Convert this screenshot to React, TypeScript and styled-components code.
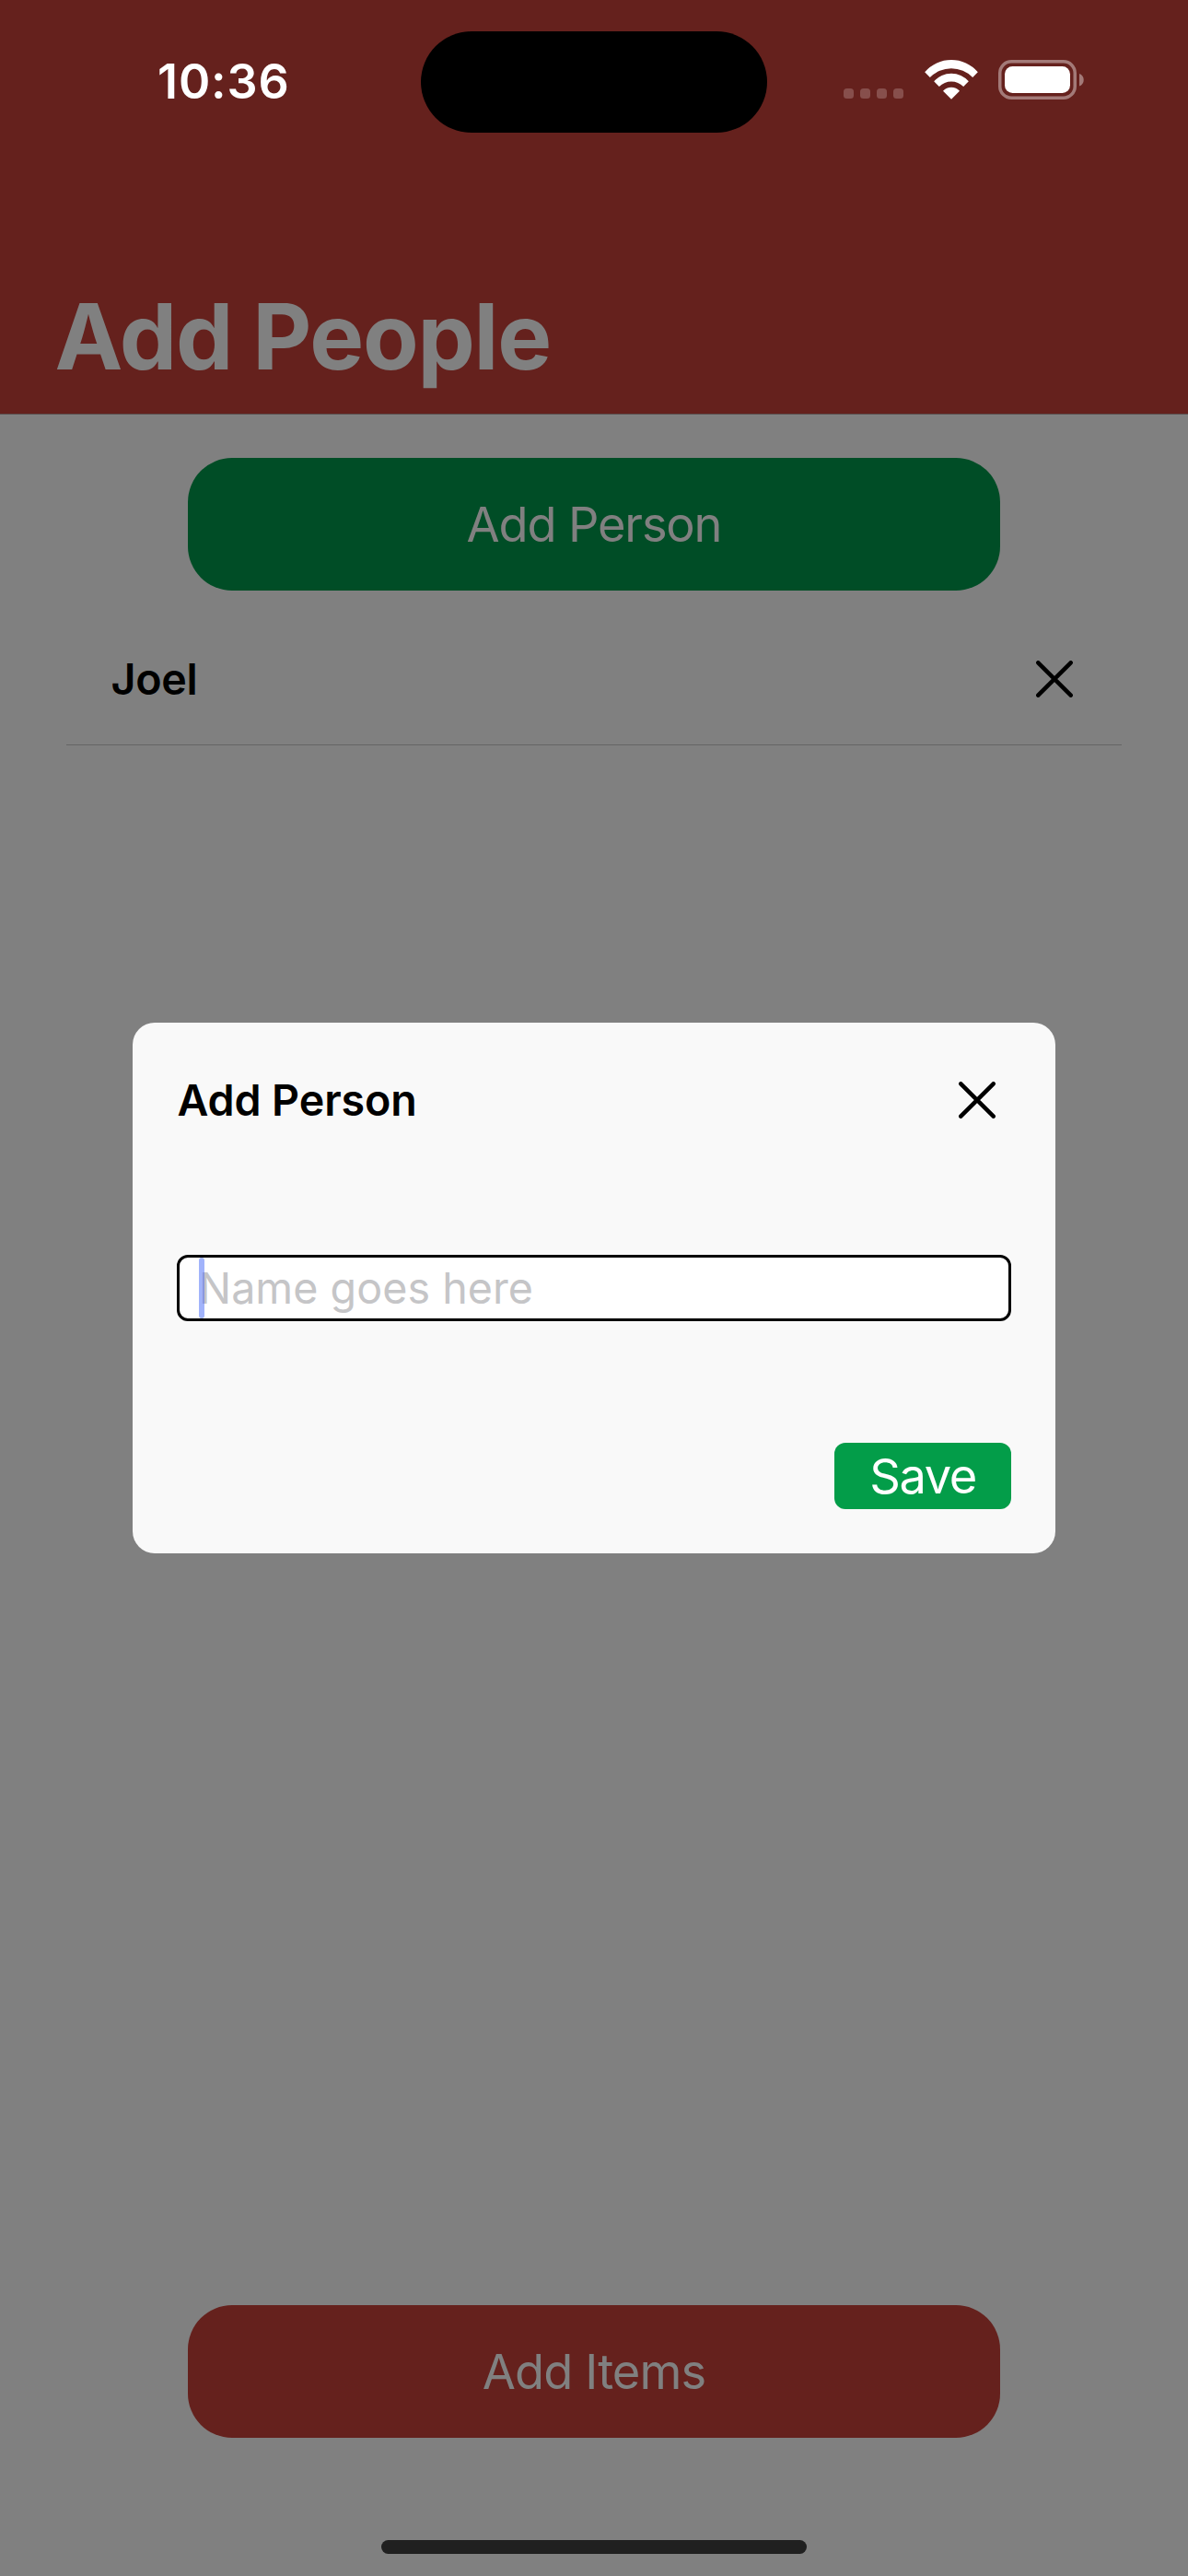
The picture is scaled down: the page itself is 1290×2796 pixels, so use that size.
import React from "react";
import styled, { createGlobalStyle } from "styled-components";

const colors = {
  dimRed: "#65211d",
  dimGreen: "#004d26",
  dimWhite: "#808080",
  green: "#039d49",
  surface: "#f9f9f9",
};

const GlobalStyle = createGlobalStyle`
  *, *::before, *::after { box-sizing: border-box; }
  body { margin: 0; background: ${colors.dimWhite}; }
  button { border: 0; margin: 0; padding: 0; background: none; font: inherit; color: inherit; }
`;

const Screen = styled.div`
  position: relative;
  display: flex;
  flex-direction: column;
  width: 1290px;
  height: 2796px;
  overflow: hidden;
  background: ${colors.dimWhite};
  color: #000;
  font-family: "Inter", "Liberation Sans", sans-serif;
`;

const Header = styled.header`
  display: flex;
  flex-direction: column;
  justify-content: space-between;
  height: 450px;
  background: ${colors.dimRed};
  border-bottom: 1px solid #5b5151;
`;

const StatusBar = styled.div`
  display: grid;
  grid-template-columns: 457px 376px 1fr;
  height: 178px;
  align-items: center;
  color: #fff;
`;

const Time = styled.time`
  padding-left: 171px;
  font-size: 52px;
  font-weight: 600;
  line-height: 64px;
  letter-spacing: 0.9px;
`;

const Island = styled.div`
  height: 110px;
  border-radius: 55px;
  background: #000;
`;

const StatusIcons = styled.div`
  display: flex;
  align-items: center;
  padding-left: 83px;
`;

const SignalDots = styled.div`
  display: flex;
  gap: 7px;
  margin: 25px 22.5px 0 0;
`;

const SignalDot = styled.span`
  width: 11px;
  height: 11px;
  border-radius: 3.5px;
  background: #874f4c;
`;

const WifiIcon = styled.svg`
  width: 58px;
  height: 43px;
  margin: -5px 22.5px 0 0;
`;

const BatteryIcon = styled.svg`
  width: 94px;
  height: 43px;
  margin-top: -5px;
`;

const Title = styled.h1`
  margin: 0;
  padding: 0 0 24px 59.5px;
  color: ${colors.dimWhite};
  font-size: 99px;
  font-weight: 700;
  line-height: 120px;
  letter-spacing: -1.28px;
`;

const Content = styled.main`
  display: flex;
  flex: 1;
  flex-direction: column;
  align-items: center;
  padding: 47px 72px 24px;
`;

const WideButton = styled.button<{ $color: string; $spacing: number }>`
  width: 882px;
  height: 144px;
  border-radius: 48px;
  background: ${(p) => p.$color};
  color: ${colors.dimWhite};
  font-size: 52.4px;
  line-height: 64px;
  letter-spacing: ${(p) => p.$spacing}px;
`;

const PeopleList = styled.ul`
  flex: 1;
  width: 100%;
  margin: 0;
  padding: 25px 0 0;
  list-style: none;
`;

const PersonRow = styled.li`
  display: flex;
  align-items: center;
  justify-content: space-between;
  height: 143px;
  padding: 0 37px 0 48.5px;
  border-bottom: 1px solid #646464;
`;

const PersonName = styled.span`
  font-size: 46.6px;
  font-weight: 600;
  line-height: 56px;
  letter-spacing: -0.3px;
`;

const IconButton = styled.button`
  display: flex;
  align-items: center;
  justify-content: center;
  width: 72px;
  height: 72px;
`;

const HomeIndicator = styled.div`
  width: 462px;
  height: 15px;
  margin-top: 111px;
  border-radius: 8px;
  background: #202020;
`;

const ModalLayer = styled.div`
  position: absolute;
  inset: 0;
  display: flex;
  align-items: center;
  justify-content: center;
`;

const Modal = styled.section`
  display: flex;
  flex-direction: column;
  justify-content: space-between;
  width: 1002px;
  height: 576px;
  padding: 48px;
  border-radius: 24px;
  background: ${colors.surface};
`;

const ModalHeader = styled.div`
  display: flex;
  align-items: center;
  justify-content: space-between;
  padding-right: 1px;
`;

const ModalTitle = styled.h2`
  margin: 0 0 0 0.5px;
  font-size: 46.6px;
  font-weight: 600;
  line-height: 56px;
  letter-spacing: -0.12px;
`;

const Field = styled.label`
  position: relative;
  display: flex;
  height: 72px;
`;

const NameInput = styled.input`
  width: 100%;
  margin: 0;
  padding: 0 21px;
  border: 3px solid #000;
  border-radius: 12px;
  outline: 0;
  background: #fff;
  font-family: inherit;
  font-size: 46.6px;
  letter-spacing: 0.05px;

  &::placeholder {
    color: #c5c5c7;
    opacity: 1;
  }
`;

const Caret = styled.span`
  position: absolute;
  top: 3px;
  left: 24px;
  width: 6px;
  height: 66px;
  border-radius: 3px;
  background: rgba(68, 104, 248, 0.5);
`;

const SaveButton = styled.button`
  align-self: flex-end;
  width: 192px;
  height: 72px;
  border-radius: 12px;
  background: ${colors.green};
  color: #fff;
  font-size: 52.4px;
  line-height: 64px;
  letter-spacing: -1.4px;
`;

const CloseIcon = () => (
  <svg width="40" height="40" viewBox="0 0 40 40" aria-hidden="true">
    <path d="M2.3 2.3 37.7 37.7M37.7 2.3 2.3 37.7" stroke="#000" strokeWidth="4.5" strokeLinecap="round" />
  </svg>
);

const Wifi = () => (
  <WifiIcon viewBox="0 0 174 129" fill="#fff" aria-hidden="true">
    <path d="M0.5 40A114 114 0 0 1 173.5 40L156.5 57A98 98 0 0 0 17.5 57Z" />
    <path d="M30.5 70A75 75 0 0 1 143.5 70L126.5 87A56 56 0 0 0 47.5 87Z" />
    <path d="M60 101A37 37 0 0 1 114 101L87 128Z" />
  </WifiIcon>
);

const Battery = () => (
  <BatteryIcon viewBox="0 0 94 43" aria-hidden="true">
    <rect x="1.75" y="1.75" width="81.5" height="39.5" rx="12.5" fill="none" stroke="#a37a78" strokeWidth="3.5" />
    <rect x="7" y="7" width="71" height="29" rx="8.5" fill="#fff" />
    <path d="M88 15C94.3 17 94.3 26.5 88 28.5Z" fill="#a37a78" />
  </BatteryIcon>
);

const people = ["Joel"];

export default function App() {
  return (
    <Screen>
      <GlobalStyle />
      <Header>
        <StatusBar>
          <Time>10:36</Time>
          <Island />
          <StatusIcons>
            <SignalDots>
              {[0, 1, 2, 3].map((dot) => (
                <SignalDot key={dot} />
              ))}
            </SignalDots>
            <Wifi />
            <Battery />
          </StatusIcons>
        </StatusBar>
        <Title>Add People</Title>
      </Header>
      <Content>
        <WideButton $color={colors.dimGreen} $spacing={-1.17}>
          Add Person
        </WideButton>
        <PeopleList>
          {people.map((name) => (
            <PersonRow key={name}>
              <PersonName>{name}</PersonName>
              <IconButton aria-label={`Remove ${name}`}>
                <CloseIcon />
              </IconButton>
            </PersonRow>
          ))}
        </PeopleList>
        <WideButton $color={colors.dimRed} $spacing={-0.9}>
          Add Items
        </WideButton>
        <HomeIndicator />
      </Content>
      <ModalLayer>
        <Modal role="dialog">
          <ModalHeader>
            <ModalTitle>Add Person</ModalTitle>
            <IconButton aria-label="Close">
              <CloseIcon />
            </IconButton>
          </ModalHeader>
          <Field>
            <NameInput placeholder="Name goes here" />
            <Caret />
          </Field>
          <SaveButton>Save</SaveButton>
        </Modal>
      </ModalLayer>
    </Screen>
  );
}
